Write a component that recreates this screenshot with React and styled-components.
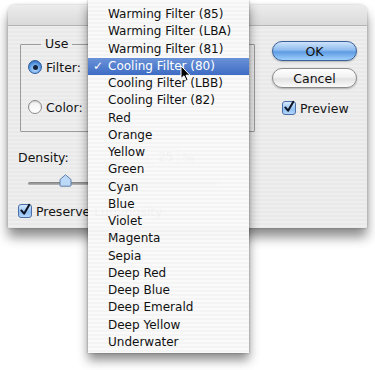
import React from "react"
import styled, { createGlobalStyle } from "styled-components"

const GlobalStyle = createGlobalStyle`
  html, body {
    margin: 0;
    padding: 0;
    background: #ffffff;
  }
  body {
    font-family: "DejaVu Sans", "Liberation Sans", sans-serif;
    font-size: 12px;
    color: #141414;
  }
`

const Stage = styled.div`
  position: relative;
  width: 375px;
  height: 370px;
  padding: 5px 0 0 8px;
  box-sizing: border-box;
  overflow: hidden;
`

const Dialog = styled.div`
  width: 359px;
  height: 223px;
  border-radius: 7px 7px 2px 2px;
  background: repeating-linear-gradient(#eeeeee 0 2px, #e9e9e9 2px 4px);
  box-shadow: 0 9px 12px rgba(0, 0, 0, 0.45), 0 0 3px rgba(0, 0, 0, 0.25);
  display: flex;
  flex-direction: column;
  overflow: hidden;
`

const TitleBar = styled.div`
  height: 20px;
  flex: none;
  background: linear-gradient(#ececec, #dadada);
  border-bottom: 1px solid #b4b4b4;
`

const Body = styled.div`
  flex: 1;
  display: flex;
  padding: 0 10px 0 11px;
`

const LeftColumn = styled.div`
  display: flex;
  flex-direction: column;
`

const GroupBox = styled.fieldset`
  width: 235px;
  box-sizing: border-box;
  margin: 11px 0 0 1px;
  padding: 6px 8px 14px 7px;
  border: 1px solid #9c9c9c;
  border-radius: 1px;
  display: flex;
  flex-direction: column;
  gap: 20px;
`

const Legend = styled.legend`
  padding: 0 4px;
  margin-left: 13px;
  line-height: 14px;
  font-size: 12.5px;
`

const OptionRow = styled.label`
  display: flex;
  align-items: center;
  gap: 4px;
  height: 20px;
  font-size: 12.5px;
`

const Radio = styled.span`
  width: 14px;
  height: 14px;
  border-radius: 50%;
  box-sizing: border-box;
  display: flex;
  align-items: center;
  justify-content: center;
  border: 1px solid ${p => (p.checked ? "#2f5c9c" : "#8a8a8a")};
  background: ${p =>
    p.checked
      ? "radial-gradient(circle at 50% 70%, #bfe0ff 0%, #5e9ce6 55%, #2d6cc6 100%)"
      : "linear-gradient(#f1f1f1, #ffffff)"};
  box-shadow: inset 0 1px 1px rgba(0, 0, 0, 0.15);

  &::after {
    content: "";
    display: ${p => (p.checked ? "block" : "none")};
    width: 5px;
    height: 5px;
    border-radius: 50%;
    background: #15233b;
  }
`

const DensityRow = styled.div`
  display: flex;
  align-items: center;
  height: 14px;
  margin-top: 18px;
  margin-left: -1px;
  font-size: 12.5px;
`

const ValueField = styled.span`
  margin-left: 78px;
  width: 26px;
  height: 16px;
  border: 1px solid #9a9a9a;
  background: #ffffff;
  text-align: right;
  padding-right: 3px;
  line-height: 16px;
`

const Percent = styled.span`
  margin-left: 5px;
`

const SliderRow = styled.div`
  position: relative;
  height: 16px;
  margin-top: 11px;
  margin-left: 9px;
  width: 190px;
  display: flex;
  align-items: center;
`

const Track = styled.div`
  width: 100%;
  height: 3px;
  border-radius: 2px;
  background: linear-gradient(#7d7d7d, #b8b8b8);
`

const Thumb = styled.svg`
  position: absolute;
  top: -1px;
`

const CheckRow = styled.label`
  display: flex;
  align-items: center;
  gap: 4px;
  height: 16px;
  margin-top: ${p => p.top || 0}px;
  margin-left: ${p => p.left || 0}px;
  font-size: 12.5px;
`

const CheckBox = styled.span`
  width: 14px;
  height: 14px;
  box-sizing: border-box;
  border: 1px solid #4a6ea5;
  border-radius: 3px;
  background: linear-gradient(#d6e9ff, #8fbff2 60%, #b5d7fb);
  display: flex;
  align-items: center;
  justify-content: center;
  overflow: visible;
`

const RightColumn = styled.div`
  margin-left: auto;
  width: 85px;
  padding-top: 15px;
  display: flex;
  flex-direction: column;
`

const PillButton = styled.button`
  width: 85px;
  height: 20px;
  margin-top: ${p => p.top || 0}px;
  border-radius: 10px;
  font-family: inherit;
  font-size: 12.5px;
  color: #111111;
  padding: 0;
  border: 1px solid ${p => (p.primary ? "#3b5f9a" : "#8c8c8c")};
  background: ${p =>
    p.primary
      ? "linear-gradient(#cfe3fb 0%, #8ebcef 45%, #5d9be4 55%, #9fd0fb 100%)"
      : "linear-gradient(#ffffff 0%, #f1f1f1 45%, #e2e2e2 55%, #fbfbfb 100%)"};
  box-shadow: 0 1px 2px rgba(0, 0, 0, 0.25);
`

const Menu = styled.div`
  position: absolute;
  left: 88px;
  top: 0;
  width: 161px;
  padding: 6px 0 2px;
  background: repeating-linear-gradient(
    rgba(250, 250, 250, 0.97) 0 2px,
    rgba(244, 244, 244, 0.97) 2px 4px
  );
  box-shadow: 0 7px 10px rgba(0, 0, 0, 0.45), 0 0 2px rgba(0, 0, 0, 0.35);
`

const MenuItem = styled.div`
  position: relative;
  height: 17.25px;
  line-height: 17.25px;
  padding-left: 20px;
  white-space: nowrap;
  color: ${p => (p.selected ? "#ffffff" : "#111111")};
  background: ${p =>
    p.selected ? "linear-gradient(#6a92d8, #3e6cc4)" : "transparent"};
`

const Tick = styled.span`
  position: absolute;
  left: 5px;
  top: 0;
`

const Cursor = styled.svg`
  position: absolute;
  left: 180px;
  top: 65px;
`

const items = [
  "Warming Filter (85)",
  "Warming Filter (LBA)",
  "Warming Filter (81)",
  "Cooling Filter (80)",
  "Cooling Filter (LBB)",
  "Cooling Filter (82)",
  "Red",
  "Orange",
  "Yellow",
  "Green",
  "Cyan",
  "Blue",
  "Violet",
  "Magenta",
  "Sepia",
  "Deep Red",
  "Deep Blue",
  "Deep Emerald",
  "Deep Yellow",
  "Underwater",
]

function Check() {
  return (
    <svg width="13" height="14" viewBox="0 0 13 14" style={{ marginTop: -3 }}>
      <path d="M2.5 7.5 L5.5 11 L11 1.5" fill="none" stroke="#0f1420" strokeWidth="2.2" strokeLinecap="round" strokeLinejoin="round" />
    </svg>
  )
}

export default function App() {
  const density = 25
  return (
    <>
      <GlobalStyle />
      <Stage>
        <Dialog>
          <TitleBar />
          <Body>
            <LeftColumn>
              <GroupBox>
                <Legend>Use</Legend>
                <OptionRow>
                  <Radio checked />
                  Filter:
                </OptionRow>
                <OptionRow>
                  <Radio />
                  Color:
                </OptionRow>
              </GroupBox>
              <DensityRow>
                Density:
                <ValueField>{density}</ValueField>
                <Percent>%</Percent>
              </DensityRow>
              <SliderRow>
                <Track />
                <Thumb width="13" height="13" viewBox="0 0 13 13" style={{ left: `${density * 1.22}px` }}>
                  <path d="M6.5 0.8 L12 5.5 L12 11.5 Q12 12.2 11.3 12.2 L1.7 12.2 Q1 12.2 1 11.5 L1 5.5 Z" fill="#bcd9f7" stroke="#5f7fa8" strokeWidth="1" />
                </Thumb>
              </SliderRow>
              <CheckRow top={12} left={-1}>
                <CheckBox>
                  <Check />
                </CheckBox>
                Preserve Luminosity
              </CheckRow>
            </LeftColumn>
            <RightColumn>
              <PillButton primary>OK</PillButton>
              <PillButton top={7}>Cancel</PillButton>
              <CheckRow top={12} left={10}>
                <CheckBox>
                  <Check />
                </CheckBox>
                Preview
              </CheckRow>
            </RightColumn>
          </Body>
        </Dialog>
        <Menu>
          {items.map(name => (
            <MenuItem key={name} selected={name === "Cooling Filter (80)"}>
              {name === "Cooling Filter (80)" && <Tick>✓</Tick>}
              {name}
            </MenuItem>
          ))}
        </Menu>
        <Cursor width="11" height="17" viewBox="0 0 11 17">
          <path d="M1 1 L1 13.5 L4 10.8 L6.3 15.8 L8.2 15 L6 10.2 L10 10.2 Z" fill="#000000" stroke="#ffffff" strokeWidth="1" />
        </Cursor>
      </Stage>
    </>
  )
}
